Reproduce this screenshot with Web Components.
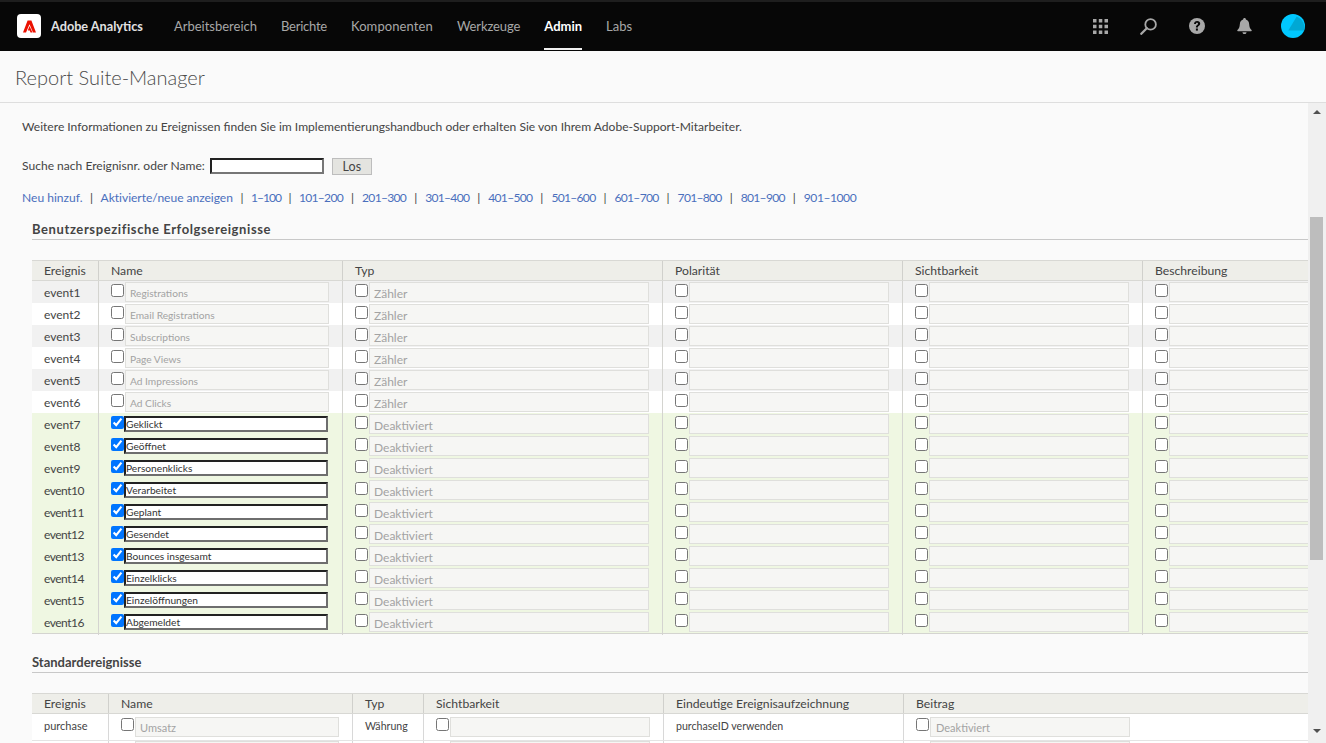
<!DOCTYPE html>
<html lang="de"><head><meta charset="utf-8"><title>Report Suite-Manager</title>
<style>
html,body{margin:0;height:743px;overflow:hidden;background:#fafafa;font-family:Lato,"Liberation Sans",sans-serif;color:#444}
body{display:flex;flex-direction:column;width:1326px}
</style></head><body>
<app-bar></app-bar>
<page-title>Report Suite-Manager</page-title>
<scroll-pane>
  <p-intro></p-intro>
  <event-section heading="Benutzerspezifische Erfolgsereignisse" class="cust"><custom-events></custom-events></event-section>
  <event-section heading="Standardereignisse" class="std"><standard-events></standard-events></event-section>
</scroll-pane>
<script>
const def=(name,html)=>customElements.define(name,class extends HTMLElement{connectedCallback(){if(this.shadowRoot)return;const s=this.attachShadow({mode:'open'});s.innerHTML=typeof html==='function'?html(this):html;}});

def('app-bar',`<style>
:host{display:flex;flex:none;height:49px;border-top:2px solid #1e1e1e;background:#070707;align-items:center;padding:0 21px 0 17px;font-size:13px;color:#a8a8a8}
.logo{width:24px;height:24px;background:#fff;border-radius:4px;display:flex;align-items:center;justify-content:center;margin-right:10px;flex:none;margin-bottom:1px}
.brand{color:#e2e2e2;font-weight:700;margin-right:31px;font-size:12.7px;margin-bottom:2px}
nav{display:flex;gap:24px;height:48px;align-self:flex-start}
nav a{display:flex;align-items:center;box-sizing:border-box;border-bottom:2px solid transparent;padding-top:2px}
nav a.on{color:#fff;font-weight:700;border-bottom-color:#f0f0f0}
.right{margin-left:auto;display:flex;align-items:center;margin-bottom:1px}
svg{display:block}
</style>
<span class="logo"><svg width="13" height="13" viewBox="0 0 13 12"><path fill="#eb1000" d="M4.600 0H8.400L13 12H10L6.500 3.800 3 12H0zM6.500 5.500 9.500 12H7.500L6.800 10H4.800z"/></svg></span>
<span class="brand">Adobe Analytics</span>
<nav><a>Arbeitsbereich</a><a style="letter-spacing:-.25px">Berichte</a><a style="letter-spacing:.1px">Komponenten</a><a style="letter-spacing:-.1px">Werkzeuge</a><a class="on">Admin</a><a>Labs</a></nav>
<div class="right">
<svg width="15" height="15" viewBox="0 0 15 15" fill="#a8a8a8" style="margin-right:32px"><path d="M0 0h3.500v3.500H0zM5.800 0h3.500v3.500H5.800zM11.500 0H15v3.500h-3.500zM0 5.800h3.500v3.500H0zM5.800 5.800h3.500v3.500H5.800zM11.500 5.800H15v3.500h-3.500zM0 11.500h3.500V15H0zM5.800 11.500h3.500V15H5.800zM11.500 11.500H15V15h-3.500z"/></svg>
<svg width="17" height="17" viewBox="0 0 17 17" fill="none" stroke="#a8a8a8" style="margin-right:32px"><circle cx="10.600" cy="6.400" r="5.300" stroke-width="1.800"/><path d="M6.800 10.200 1.300 15.800" stroke-width="2.300" stroke-linecap="round"/></svg>
<svg width="16" height="16" viewBox="0 0 16 16" style="margin-right:32px"><circle cx="8" cy="8" r="8" fill="#a8a8a8"/><path d="M5 6.100C5.100 4.200 6.400 3 8.200 3c1.800 0 3 1.100 3 2.600 0 1.200-.7 1.900-1.500 2.500-.6.400-.8.700-.8 1.300H6.900c0-1.200.4-1.800 1.200-2.400.6-.4.900-.7.900-1.200 0-.6-.4-1-1-1-.7 0-1 .5-1.100 1.300z" fill="#070707"/><rect x="6.900" y="10.500" width="2" height="2.100" fill="#070707"/></svg>
<svg width="15" height="17" viewBox="0 0 16 18" fill="#a8a8a8" style="margin-right:29px"><path d="M8 0c.9 0 1.400.6 1.500 1.500 2.300.6 3.300 2.500 3.500 5 .2 2.700.6 4.500 2.500 6.200.3.300.4 1.300-.5 1.300H1c-.9 0-.8-1-.5-1.300C2.400 11 2.800 9.200 3 6.500c.2-2.500 1.200-4.400 3.500-5C6.600.6 7.100 0 8 0zM5.800 15h4.400c-.2 1.300-1 2-2.200 2s-2-.7-2.200-2z"/></svg>
<svg width="24" height="24" viewBox="0 0 24 24"><circle cx="12" cy="12" r="12" fill="#00c8ff"/><path d="M7.300 16.600 15.700 2.600A12 12 0 0 1 23.100 16.600z" fill="#00a8d4"/></svg>
</div>`);

def('page-title',`<style>:host{display:block;flex:none;height:51px;line-height:52px;padding-left:15px;font-size:20px;font-weight:300;color:#4b4b4b;background:#fafafa;border-bottom:1px solid #dedede}</style><slot></slot>`);

def('scroll-pane',`<style>
:host{display:flex;flex:1;min-height:0;overflow:hidden}
.body{flex:1;min-width:0;overflow:hidden;padding:0 0 0 22px;background:#fafafa}
.bar{flex:none;width:18px;background:#f0f0f0;display:flex;flex-direction:column;align-items:center;box-sizing:border-box;padding:0 3px 0 2px}
.bar i{display:block;width:0;height:0;border:4px solid transparent}
.up{border-bottom-color:#505050!important;margin-top:3px}
.thumb{width:13px;height:343px;background:#bdbdbd;margin-top:103px;flex:none}
.dn{border-top-color:#505050!important;margin-top:auto;margin-bottom:6px}
</style><div class="body"><slot></slot></div><div class="bar"><i class="up"></i><div class="thumb"></div><i class="dn"></i></div>`);

const rng=['101–200','201–300','301–400','401–500','501–600','601–700','701–800','801–900','901–1000'];
def('p-intro',`<style>
:host{display:block;font-size:12.07px;color:#444}
p{margin:0;padding-top:16px;line-height:16px}
.search{display:flex;align-items:flex-start;margin-top:23px;height:18px;line-height:16px}
.box{box-sizing:border-box;height:16px;width:114px;background:#fff;border:2px solid;border-color:#222 #767676 #767676 #222;margin:0 8px 0 5px}
.go{box-sizing:border-box;width:40px;height:17px;background:#e4e4e0;border:1px solid #bdbdbd;text-align:center;line-height:15px;font-size:12.5px}
.links{margin-top:14px;color:#4a6fbd;line-height:16px;white-space:nowrap}
.links b{font-weight:400;color:#444;margin:0 8px}
.links b.t{margin:0 7.500px}
.links span{letter-spacing:-.7px}
.links span.o{letter-spacing:-1px}
.links span.e{letter-spacing:-.45px}
</style>
<p>Weitere Informationen zu Ereignissen finden Sie im Implementierungshandbuch oder erhalten Sie von Ihrem Adobe-Support-Mitarbeiter.</p>
<div class="search"><span>Suche nach Ereignisnr. oder Name:</span><span class="box"></span><span class="go">Los</span></div>
<div class="links">Neu hinzuf.<b class="t">|</b><u style="text-decoration:none;letter-spacing:-.03px">Aktivierte/neue anzeigen</u><b class="t">|</b><span class="o">1–100</span><b class="t">|</b>${rng.map((r,i)=>`${i?'<b>|</b>':''}<span ${i==8?'class="e"':''}>${r}</span>`).join('')}</div>`);

def('event-section',h=>`<style>
:host{display:block;margin:15px 0 0 10px}
:host(.std){margin-top:19px}
h2{margin:0 0 20px;font-size:13px;font-weight:700;line-height:16px;padding-bottom:2px;border-bottom:1px solid #c8c8c8;color:#444;height:16px}
:host(.cust) h2{letter-spacing:.6px}
</style><h2>${h.getAttribute('heading')}</h2><slot></slot>`);

const tableCss=`
:host{display:block;overflow:hidden;font-size:12px;color:#444}
.row{display:grid;width:1400px}
.hd{background:#eeeee9;height:19px;line-height:19px;border-top:1px solid #d8d8d4;border-bottom:1px solid #d8d8d4;font-size:12.2px}
.hd>div{padding-left:12px;border-right:1px solid #d0d0cc;box-sizing:border-box;white-space:nowrap}
.r{height:22px;background:#fff}
.r.alt{background:#f1f1f1}
.r.on{background:#eff7e2}
.c{border-right:1px solid #d4d4d0;box-sizing:border-box;display:flex;padding-left:12px;min-width:0;height:100%;line-height:22px;white-space:nowrap}
.c.k{line-height:24px}
.c>input{margin:3px 0 0 0;flex:none;width:13px;height:13px}
.f{box-sizing:border-box;height:20px;margin:1px 0 0 1px;border:1px solid #dfdfdc;background:#f6f6f4;color:#a3a3a3;padding-left:4px;line-height:22px}
.sm{font-size:10.2px;line-height:20px}
.a{box-sizing:border-box;height:16px;margin:3px 0 0 0;border:2px solid;border-color:#222 #6e6e6e #6e6e6e #222;background:#fff;color:#333;font-size:10.2px;line-height:12px;padding-left:0}
.end{box-shadow:0 1px 0 #d4d4d0;margin-bottom:1px}
`;
const names=['Registrations','Email Registrations','Subscriptions','Page Views','Ad Impressions','Ad Clicks','Geklickt','Geöffnet','Personenklicks','Verarbeitet','Geplant','Gesendet','Bounces insgesamt','Einzelklicks','Einzelöffnungen','Abgemeldet'];
const cols='67px 244px 320px 240px 240px 290px';
def('custom-events',()=>{
 let o=`<style>${tableCss}.row{grid-template-columns:${cols}}</style><div class="row hd"><div>Ereignis</div><div>Name</div><div>Typ</div><div>Polarität</div><div>Sichtbarkeit</div><div>Beschreibung</div></div>`;
 names.forEach((n,i)=>{const on=i>=6;const alt=!on&&i%2==0;
 const blank=w=>`<div class="c"><input type="checkbox"><div class="f" style="width:${w}px"></div></div>`;
 o+=`<div class="row r ${on?'on':''} ${alt?'alt':''} ${i==15?'end':''}"><div class="c k" ${i>=9?'style="letter-spacing:-.5px"':''}>event${i+1}</div>
 <div class="c"><input type="checkbox" ${on?'checked':''}>${on?`<div class="a" style="width:204px">${n}</div>`:`<div class="f sm" style="width:204px">${n}</div>`}</div>
 <div class="c"><input type="checkbox"><div class="f" style="width:280px">${on?'Deaktiviert':'Zähler'}</div></div>${blank(200)}${blank(200)}${blank(280)}</div>`;});
 return o+'<div style="height:1px"></div>';});
def('standard-events',()=>`<style>${tableCss}.row{grid-template-columns:77px 244px 71px 240px 240px 1fr}.r{height:26px;box-shadow:0 1px 0 #e4e4e4;margin-bottom:1px}.c{line-height:24px;font-size:10.6px;padding-top:0;border-right-color:#d8d8d8}.c:last-child{border-right:0}.hd>div:last-child{border-right:0}.c.p{font-size:11px}.c>input{margin-top:4px}.f{height:20px;line-height:19px;font-size:11px;margin-top:3px}.n .f{margin-top:0}</style>
<div class="row hd"><div>Ereignis</div><div>Name</div><div>Typ</div><div>Sichtbarkeit</div><div>Eindeutige Ereignisaufzeichnung</div><div>Beitrag</div></div>
<div class="row r"><div class="c p">purchase</div><div class="c"><input type="checkbox"><div class="f" style="width:204px">Umsatz</div></div><div class="c">Währung</div><div class="c"><input type="checkbox"><div class="f" style="width:200px"></div></div><div class="c">purchaseID verwenden</div><div class="c"><input type="checkbox"><div class="f" style="width:200px;padding-left:5px">Deaktiviert</div></div></div>
<div class="row r n"><div class="c"></div><div class="c"><input type="checkbox"><div class="f" style="width:204px"></div></div><div class="c"></div><div class="c"><input type="checkbox"><div class="f" style="width:200px"></div></div><div class="c"></div><div class="c"><input type="checkbox"><div class="f" style="width:200px"></div></div></div>`);
</script>
</body></html>
